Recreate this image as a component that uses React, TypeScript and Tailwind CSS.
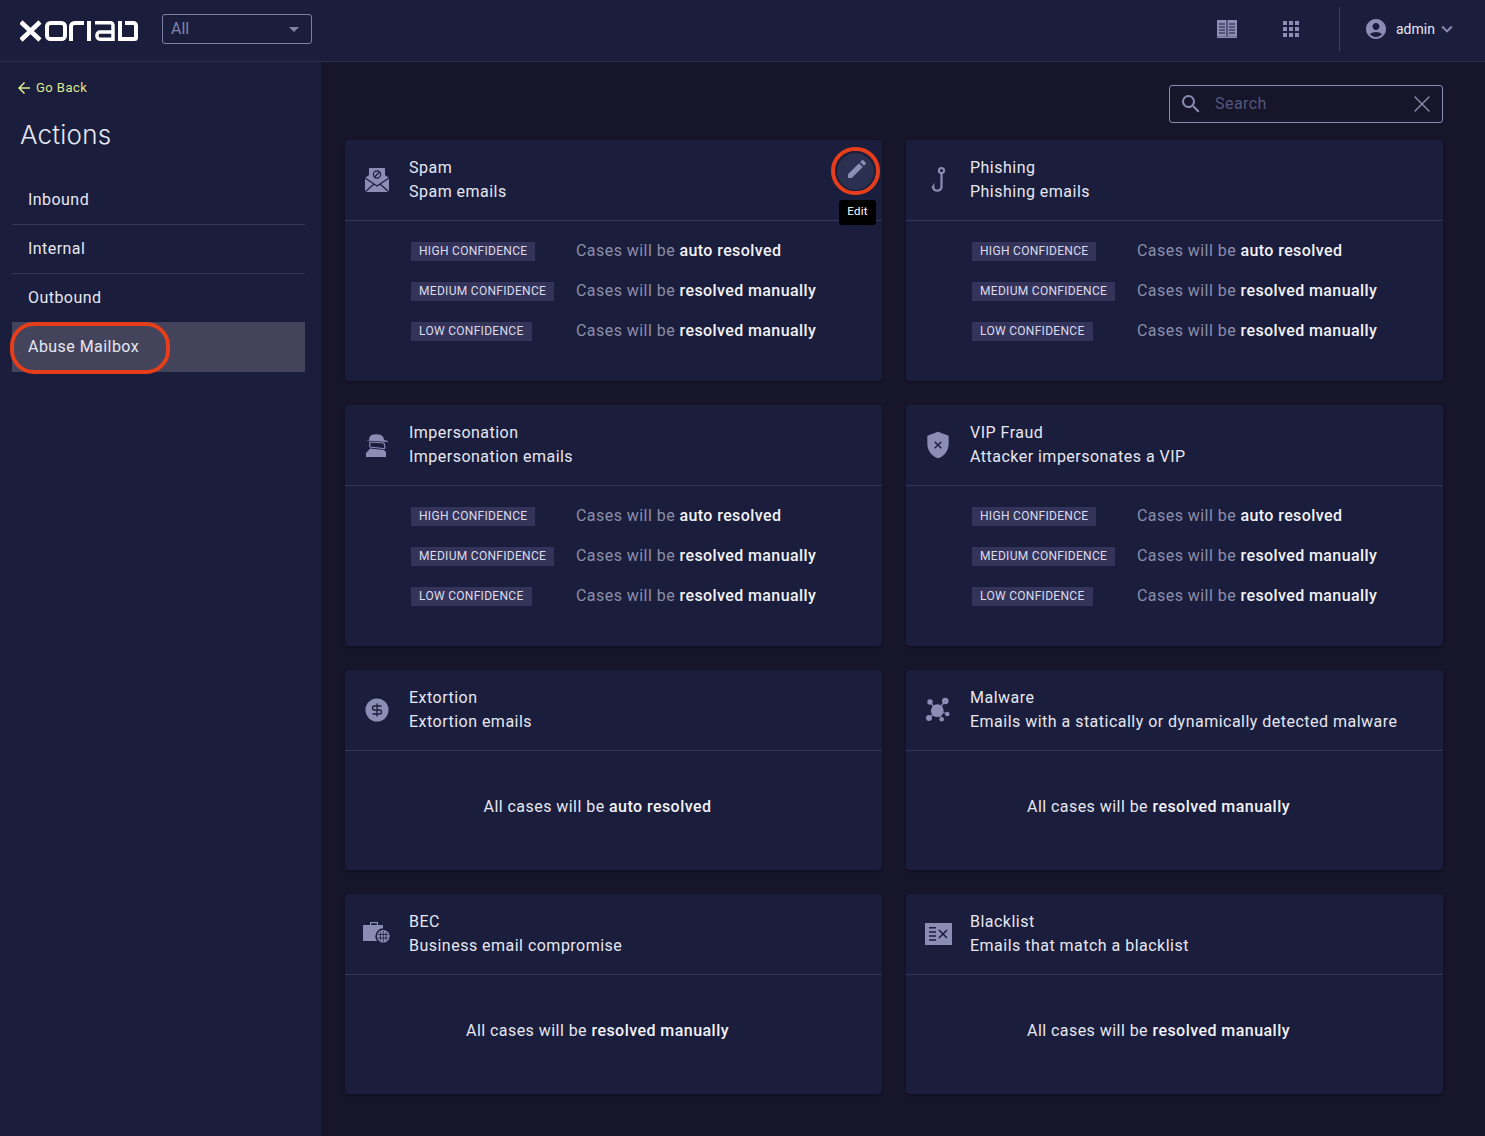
import { ReactNode } from "react"
import { X } from "lucide-react"
import { MdAccountCircle, MdApps, MdArrowBack, MdEdit, MdExpandMore, MdSearch } from "react-icons/md"

const ICON = "#8a8eb4"
const DARK = "#1a1d3b"

function Logo() {
  return (
    <svg width="118" height="24" viewBox="0 0 118 24" fill="none" stroke="#ffffff" strokeWidth="4">
      <path d="M1 3 L20 21 M20 3 L1 21" strokeWidth="4.5" />
      <rect x="27" y="4" width="18" height="16" rx="3.5" />
      <path d="M51 22 V7.5 A3.5 3.5 0 0 1 54.5 4 H64" />
      <path d="M69 2 V22" />
      <path d="M75 3.75 H90.5 A2.5 2.5 0 0 1 93 6.25 V22" strokeWidth="3.5" />
      <path d="M93 20.25 H80 A3 3 0 0 1 77 17.25 V16 A3 3 0 0 1 80 13 H93" strokeWidth="3.5" />
      <path d="M100 2 V20 H114.5 A1.5 1.5 0 0 0 116 18.5 V6.5 A2.5 2.5 0 0 0 113.5 4 H105" />
    </svg>
  )
}

function BookIcon() {
  return (
    <svg width="20" height="18" viewBox="0 0 20 18" fill={ICON}>
      <rect x="0" y="0" width="9.5" height="16.5" />
      <rect x="10.5" y="0" width="9.5" height="16.5" />
      <rect x="0" y="16.5" width="20" height="1.5" />
      <path d="M2 4H8M2 7H8M2 10H8M2 13H8M12 4H18M12 7H18M12 10H18M12 13H18" stroke={DARK} strokeWidth="1" />
    </svg>
  )
}

function SpamIcon() {
  return (
    <svg width="28" height="28" viewBox="0 0 28 28" fill={ICON}>
      <path d="M2 12 L6 9 V2 H22 V9 L26 12 V26 H2 Z" />
      <path d="M2 12 L14 20 L26 12 M2 26 L11 18 M26 26 L17 18" stroke={DARK} strokeWidth="1.2" fill="none" />
      <circle cx="14" cy="8.5" r="3.6" stroke={DARK} strokeWidth="1.2" fill="none" />
      <path d="M11.5 11 L16.5 6" stroke={DARK} strokeWidth="1.2" />
    </svg>
  )
}

function HookIcon() {
  return (
    <svg width="28" height="28" viewBox="0 0 28 28" fill="none" stroke={ICON} strokeWidth="2">
      <circle cx="17.5" cy="4.5" r="2.6" />
      <path d="M17.5 7 V21.5 A4.4 4.4 0 0 1 9 21.5 V20" strokeWidth="2.2" />
      <path d="M7.5 22 L10.3 16.5 V22 Z" fill={ICON} stroke="none" />
    </svg>
  )
}

function SpyIcon() {
  return (
    <svg width="28" height="28" viewBox="0 0 28 28" fill={ICON}>
      <path d="M6 9 C6 5 9 3 12 3.5 C13 3 14 3 15 3.5 C19 3.5 21 6 21 9 L25 10 V11 L3 9.5 Z" />
      <path d="M7 11 L21 12 L22 16 C22 17.5 21 18 20 17.5 L7 16 C6.5 14 6.5 12.5 7 11 Z" fill="none" stroke={ICON} strokeWidth="1.2" />
      <path d="M7 17.5 L21 19 L23 21 V26 H3 V22 L5 20 Z" />
    </svg>
  )
}

function ShieldIcon() {
  return (
    <svg width="32" height="32" viewBox="0 0 24 24" fill={ICON}>
      <path d="M12 2 4 5v6.09c0 5.05 3.41 9.76 8 10.91 4.59-1.15 8-5.86 8-10.91V5l-8-3z" />
      <path d="M9.5 9.5 L14.5 14.5 M14.5 9.5 L9.5 14.5" stroke={DARK} strokeWidth="1" />
    </svg>
  )
}

function DollarIcon() {
  return (
    <svg width="28" height="28" viewBox="0 0 28 28" fill="none">
      <circle cx="14" cy="14" r="11.5" fill={ICON} />
      <path d="M18.5 10 H11.5 A2 2 0 0 0 11.5 14 H16.5 A2 2 0 0 1 16.5 18 H9.5 M14 7.5 V20.5" stroke={DARK} strokeWidth="1.3" />
    </svg>
  )
}

function MalwareIcon() {
  return (
    <svg width="28" height="28" viewBox="0 0 28 28" fill={ICON} stroke={ICON} strokeWidth="1.2">
      <path d="M13.3 14.7 L6 6 M13.3 14.7 L21.3 5 M13.3 14.7 L23.3 18 M13.3 14.7 L17.7 23.3 M13.3 14.7 L5 22" fill="none" />
      <circle cx="13.3" cy="14.7" r="6.4" stroke="none" />
      <circle cx="6" cy="6" r="2.7" stroke="none" />
      <circle cx="21.3" cy="5" r="3.3" stroke="none" />
      <circle cx="23.3" cy="18" r="2.3" stroke="none" />
      <circle cx="17.7" cy="23.3" r="2.3" stroke="none" />
      <circle cx="5" cy="22" r="3" stroke="none" />
    </svg>
  )
}

function BecIcon() {
  return (
    <svg width="28" height="28" viewBox="0 0 28 28" fill={ICON}>
      <path d="M7 5 V2 H15 V5 H13.8 V3.2 H8.2 V5 Z" />
      <rect x="0" y="5" width="20" height="16" />
      <circle cx="20.3" cy="16.3" r="8" fill={DARK} />
      <circle cx="20.3" cy="16.3" r="6.3" />
      <path d="M15 14.5 H25.5 M15 18 H25.5 M20.3 11 V21.5 M17.5 12 V20.5 M23 12 V20.5" stroke={DARK} strokeWidth="0.8" fill="none" />
    </svg>
  )
}

function BlacklistIcon() {
  return (
    <svg width="27" height="22" viewBox="0 0 27 22" fill={ICON}>
      <rect x="0" y="0" width="27" height="22" />
      <path d="M4 4.7 H11 M4 9 H11 M4 13 H11 M4 17 H11" stroke={DARK} strokeWidth="1.6" />
      <path d="M14 7 L22 15 M22 7 L14 15" stroke={DARK} strokeWidth="1.6" />
    </svg>
  )
}

function Resolved({ label, text }: { label: string; text: string }) {
  return (
    <div className="flex h-5 items-center">
      <div className="flex h-5 w-[165px] shrink-0 items-end">
        <span className="flex h-[19px] items-center bg-[#34345a] px-2 pb-px text-[12px] tracking-[0.3px] text-[#dcdcec]">
          {label}
        </span>
      </div>
      <p className="text-[#8b8eaa]">
        Cases will be <span className="font-medium tracking-[0.4px] text-[#f2f2f8]">{text}</span>
      </p>
    </div>
  )
}

function ActionCard({
  icon,
  title,
  desc,
  all,
  overlay,
}: {
  icon: ReactNode
  title: string
  desc: string
  all?: string
  overlay?: ReactNode
}) {
  return (
    <div className="relative rounded bg-[#1a1d3b] shadow-[0_1px_3px_rgba(0,0,0,0.3)]">
      <div className="flex h-[81px] items-center border-b border-[#33355a]">
        <div className="flex w-16 shrink-0 justify-center">{icon}</div>
        <div className="leading-6 tracking-[0.48px] text-[#e6e7f2]">
          <p>{title}</p>
          <p>{desc}</p>
        </div>
      </div>
      {all ? (
        <div className="flex h-[119px] items-center justify-center pr-8 pb-2 text-[#e6e7f2]">
          <p>
            All cases will be <span className="font-medium text-[#f2f2f8]">{all}</span>
          </p>
        </div>
      ) : (
        <div className="flex h-40 flex-col gap-5 pt-5 pl-[66px]">
          <Resolved label="HIGH CONFIDENCE" text="auto resolved" />
          <Resolved label="MEDIUM CONFIDENCE" text="resolved manually" />
          <Resolved label="LOW CONFIDENCE" text="resolved manually" />
        </div>
      )}
      {overlay}
    </div>
  )
}

const navItems = ["Inbound", "Internal", "Outbound"]

export default function App() {
  return (
    <div className="flex h-[1136px] w-full flex-col overflow-hidden bg-[#16152a] font-['Roboto',sans-serif] text-[16px] tracking-[0.45px]">
      <header className="flex h-[62px] shrink-0 items-center border-b border-[#2d2f45] bg-[#1a1d3b] pb-[3px]">
        <div className="mt-1 ml-5 flex w-[142px] shrink-0">
          <Logo />
        </div>
        <div className="flex h-[30px] w-[150px] items-center justify-between rounded-[3px] border border-[#7d80a6] pr-[12px] pl-2 text-[#8184a6]">
          <span className="tracking-normal">All</span>
          <span className="h-0 w-0 border-x-[5px] border-t-[5px] border-x-transparent border-t-[#8184a6]" />
        </div>
        <div className="ml-auto flex h-full items-center">
          <BookIcon />
          <div className="ml-[42px]">
            <MdApps size={24} color={ICON} />
          </div>
          <div className="mr-6 ml-9 h-11 w-px bg-[#3d3f5e]" />
          <MdAccountCircle size={24} color={ICON} />
          <span className="ml-2 w-10 text-[14px] tracking-normal text-[#e6e7f2]">admin</span>
          <div className="mr-[27px]">
            <MdExpandMore size={22} color={ICON} />
          </div>
        </div>
      </header>

      <div className="flex min-h-0 flex-1">
        <aside className="w-[321px] shrink-0 bg-[#1a1d3b] pr-4 pl-3">
          <div className="flex items-center gap-[3px] pt-[17px] pl-[3px] text-[13px] leading-[18px] text-[#dfe98f]">
            <MdArrowBack size={18} />
            <span>Go Back</span>
          </div>
          <h1 className="mt-5 pl-2 font-['Inter',sans-serif] text-[26px] leading-9 font-light tracking-[0.2px] text-[#e6e7f2]">
            Actions
          </h1>
          <nav className="relative mt-[23px] text-[#e6e7f2]">
            {navItems.map((item, i) => (
              <div
                key={item}
                className={
                  i < 2
                    ? "flex h-[49px] items-center border-b border-[#33355a] pl-4"
                    : "flex h-[48px] items-center pl-4"
                }
              >
                {item}
              </div>
            ))}
            <div className="flex h-[50px] items-center bg-[#43445c] pl-4">Abuse Mailbox</div>
            <div className="absolute top-[146px] left-[-2px] h-[52px] w-[160px] rounded-[24px] border-4 border-[#e63e1a]" />
          </nav>
        </aside>

        <main className="min-w-0 flex-1 pt-[23px] pr-[42px] pl-6">
          <div className="flex justify-end">
            <div className="flex h-[38px] w-[274px] items-center rounded-[3px] border border-[#8a8cb5] pr-[6px] pl-[9px]">
              <MdSearch size={24} color={ICON} />
              <span className="ml-3 flex-1 text-[#55577a]">Search</span>
              <X size={28} color={ICON} strokeWidth={1.2} />
            </div>
          </div>
          <div className="mt-[17px] grid grid-cols-2 gap-6">
            <ActionCard
              icon={<SpamIcon />}
              title="Spam"
              desc="Spam emails"
              overlay={
                <>
                  <div className="absolute top-[7px] left-[486px] flex h-[48px] w-[49px] items-center justify-center rounded-full border-4 border-[#e63e1a]">
                    <div className="flex h-[37px] w-[37px] items-center justify-center rounded-full bg-[#2c3050]">
                      <div className="translate-x-px -translate-y-[2px]">
                        <MdEdit size={24} color={ICON} />
                      </div>
                    </div>
                  </div>
                  <div className="absolute top-[60px] left-[494px] flex h-[25px] w-[37px] items-center justify-center rounded-[3px] bg-black pb-px text-[11.5px] tracking-[0.3px] text-white">
                    Edit
                  </div>
                </>
              }
            />
            <ActionCard icon={<HookIcon />} title="Phishing" desc="Phishing emails" />
            <ActionCard icon={<SpyIcon />} title="Impersonation" desc="Impersonation emails" />
            <ActionCard icon={<ShieldIcon />} title="VIP Fraud" desc="Attacker impersonates a VIP" />
            <ActionCard icon={<DollarIcon />} title="Extortion" desc="Extortion emails" all="auto resolved" />
            <ActionCard
              icon={<MalwareIcon />}
              title="Malware"
              desc="Emails with a statically or dynamically detected malware"
              all="resolved manually"
            />
            <ActionCard icon={<BecIcon />} title="BEC" desc="Business email compromise" all="resolved manually" />
            <ActionCard icon={<BlacklistIcon />} title="Blacklist" desc="Emails that match a blacklist" all="resolved manually" />
          </div>
        </main>
      </div>
    </div>
  )
}
